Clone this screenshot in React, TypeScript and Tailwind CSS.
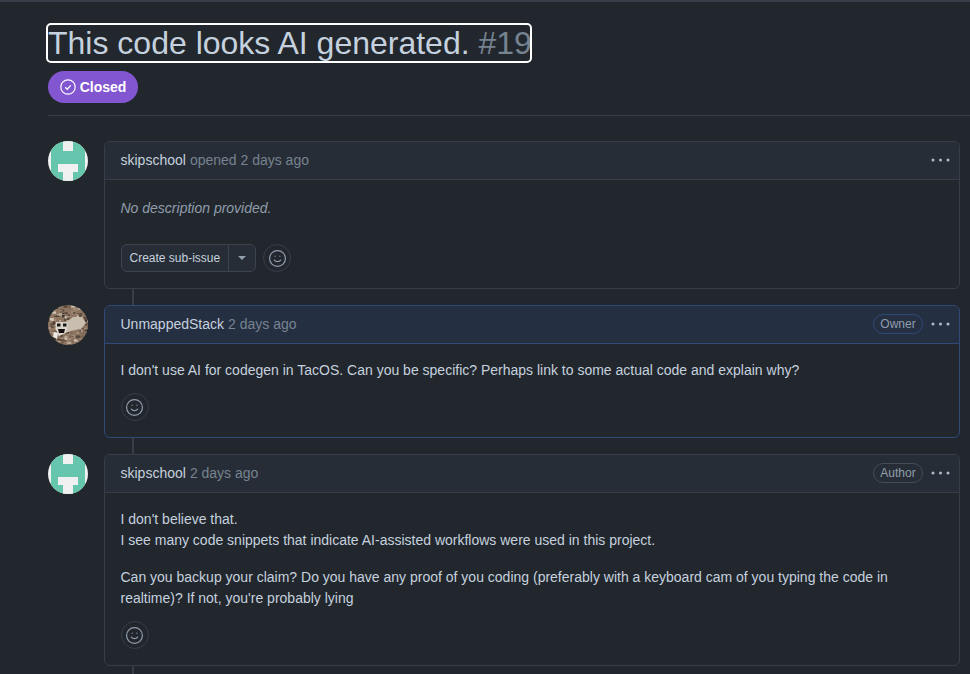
import { Smile } from 'lucide-react';
import type { ReactNode } from 'react';

const IdentAvatar = () => (
  <svg viewBox="0 0 40 40" className="h-10 w-10 shrink-0 rounded-full">
    <rect width="40" height="40" fill="#f0f0f0" />
    <rect x="3" y="0" width="34" height="40" fill="#66c5ad" />
    <rect x="15" y="0" width="10" height="10" fill="#f0f0f0" />
    <rect x="10" y="23" width="20" height="8" fill="#f0f0f0" />
    <rect x="15" y="31" width="10" height="9" fill="#f0f0f0" />
  </svg>
);

// gravel speckles for the meerkat avatar, positions just need to look random
const rnd = (n: number) => {
  const v = Math.sin(n * 12.9898) * 43758.5453;
  return v - Math.floor(v);
};
const speckles = Array.from({ length: 170 }, (_, i) => ({
  x: rnd(i + 1) * 42 - 2,
  y: rnd(i + 500) * 42 - 2,
  w: 1.5 + rnd(i + 900) * 4,
  h: 1 + rnd(i + 1300) * 2,
  fill: ['#3f322a', '#b7a591', '#5c4a3c', '#d2c4b4', '#7a6453', '#a08a75'][i % 6],
}));

const MeerkatAvatar = () => (
  <svg viewBox="0 0 40 40" className="h-10 w-10 shrink-0 rounded-full">
    <defs>
      <filter id="soft">
        <feGaussianBlur stdDeviation="0.5" />
      </filter>
    </defs>
    <g filter="url(#soft)">
      <rect x="-2" y="-2" width="44" height="44" fill="#8d7562" />
      {speckles.map((s, i) => (
        <rect key={i} x={s.x} y={s.y} width={s.w} height={s.h} fill={s.fill} />
      ))}
      <path d="M17 18l8-6 9 0 4 6-5 6-10 2-6 2z" fill="#c9bdb0" />
      <path d="M8 17h11l1 4-2 7-7 3-3-6z" fill="#d9d4cc" />
      <rect x="9" y="18.5" width="3.5" height="3" fill="#1c1815" />
      <rect x="15" y="18.5" width="3.5" height="3" fill="#1c1815" />
      <path d="M10 24h7l-1 4h-5z" fill="#14110f" />
      <path d="M6 27l4 1-1 6-4-2z" fill="#ebe7e1" />
    </g>
  </svg>
);

const ReactionButton = () => (
  <button className="flex h-7 w-7 items-center justify-center rounded-full border border-[#373e47] text-[#909dab]">
    <Smile size={19} strokeWidth={1.5} />
  </button>
);

const Label = ({ children, blue }: { children: ReactNode; blue?: boolean }) => (
  <span
    className={`flex h-5 w-[50px] items-center justify-center rounded-full border text-xs text-[#909dab] ${
      blue ? 'border-[#2c4a75]' : 'border-[#444c56]'
    }`}
  >
    {children}
  </span>
);

const Dots = () => (
  <svg viewBox="0 0 19 4" className="h-1 w-[19px] fill-[#adbac7]">
    <circle cx="2" cy="2" r="1.5" />
    <circle cx="9.5" cy="2" r="1.5" />
    <circle cx="17" cy="2" r="1.5" />
  </svg>
);

type CardProps = {
  author: string;
  meta: string;
  label?: string;
  blue?: boolean;
  bodyClass: string;
  children: ReactNode;
};

const Card = ({ author, meta, label, blue, bodyClass, children }: CardProps) => (
  <div className={`flex-1 rounded-md border ${blue ? 'border-[#2f4a75]' : 'border-[#373e47]'}`}>
    <div
      className={`flex h-[38px] items-center rounded-t-md border-b pb-[2px] pl-[15.5px] pr-[9px] ${
        blue ? 'border-[#2f4a75] bg-[#252f42]' : 'border-[#373e47] bg-[#272d36]'
      }`}
    >
      <span className="text-sm text-[#c5d1de]">{author}</span>
      <span className="ml-1 text-sm text-[#768390]">{meta}</span>
      <div className="ml-auto flex items-center gap-2">
        {label && <Label blue={blue}>{label}</Label>}
        <Dots />
      </div>
    </div>
    <div className={`pl-[15.5px] ${bodyClass}`}>{children}</div>
  </div>
);

const Connector = ({ height }: { height: string }) => (
  <div className={`ml-[84px] w-[2px] bg-[#373e47] ${height}`} />
);

export default function App() {
  return (
    <div className="h-[674px] w-[970px] overflow-hidden border-t-2 border-[#373e47] bg-[#22272e] pl-12 pr-[10px] font-['Liberation_Sans',Arial,sans-serif] text-sm text-[#c5d1de]">
      <div className="pt-[23px]">
        <h1 className="h-9 w-[482px] whitespace-nowrap rounded-[3px] text-[32px] font-normal leading-[36px] text-[#c5d1de] outline-2 outline-white">
          This code looks AI generated. <span className="text-[#768390]">#19</span>
        </h1>
      </div>
      <div className="mt-[10px]">
        <span className="inline-flex h-8 w-[90px] items-center justify-center gap-1 rounded-full bg-[#8256d0] text-sm font-bold text-white">
          <svg viewBox="0 0 16 16" className="h-4 w-4" fill="none" stroke="currentColor" strokeWidth="1.2">
            <circle cx="8" cy="8" r="7.2" />
            <path d="M5.2 8.2l2 2 3.6-3.8" strokeWidth="1.3" />
          </svg>
          Closed
        </span>
      </div>
      <div className="-mr-[10px] mt-3 h-px bg-[#373e47]" />

      <div className="mt-[25px] flex gap-4">
        <IdentAvatar />
        <Card author="skipschool" meta="opened 2 days ago" bodyClass="pt-5 h-[108px]">
          <p className="italic leading-[17px] text-[#909dab]">No description provided.</p>
          <div className="mt-[27px] flex items-center gap-[7px]">
            <div className="flex h-7 items-center rounded-md border border-[#3d444e] bg-[#272d36] text-xs text-[#c5d1de]">
              <span className="px-2">Create sub-issue</span>
              <span className="flex h-full w-[27px] items-center justify-center border-l border-[#3d444e]">
                <span className="h-0 w-0 border-x-4 border-t-4 border-x-transparent border-t-[#909dab]" />
              </span>
            </div>
            <ReactionButton />
          </div>
        </Card>
      </div>
      <Connector height="h-4" />

      <div className="flex gap-4">
        <MeerkatAvatar />
        <Card author="UnmappedStack" meta="2 days ago" label="Owner" blue bodyClass="pt-4 h-[93px]">
          <p className="leading-[21px]">
            I don't use AI for codegen in TacOS. Can you be specific? Perhaps link to some actual code and explain why?
          </p>
          <div className="mt-3">
            <ReactionButton />
          </div>
        </Card>
      </div>
      <Connector height="h-4" />

      <div className="flex gap-4">
        <IdentAvatar />
        <Card author="skipschool" meta="2 days ago" label="Author" bodyClass="pt-4 h-[172px]">
          <p className="leading-[21px]">
            I don't believe that.
            <br />I see many code snippets that indicate AI-assisted workflows were used in this project.
          </p>
          <p className="mt-4 pr-12 leading-[21px]">
            Can you backup your claim? Do you have any proof of you coding (preferably with a keyboard cam of you typing the code in realtime)? If not, you're probably lying
          </p>
          <div className="mt-3">
            <ReactionButton />
          </div>
        </Card>
      </div>
      <Connector height="h-4" />
    </div>
  );
}
